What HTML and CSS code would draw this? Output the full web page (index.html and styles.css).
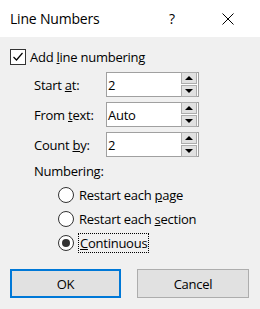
FILE: index.html
```html
<!DOCTYPE html>
<html lang="en">
<head>
    <meta charset="UTF-8">
    <title>Line Numbers</title>
    <link rel="stylesheet" href="styles.css">
</head>
<body>
    <div class="dialog">
        <div class="title-bar">
            <span class="title">Line Numbers</span>
            <span class="help">?</span>
            <span class="close">
                <svg viewBox="0 0 12 12" width="12" height="12"><path d="M0.5 0.5 L11.5 11.5 M11.5 0.5 L0.5 11.5" stroke="#000" stroke-width="1" fill="none"/></svg>
            </span>
        </div>
        <div class="content">
            <label class="check-row">
                <span class="checkbox">
                    <svg viewBox="0 0 14 14" width="14" height="14"><polyline points="2.5 7 5.5 10 11.5 3" fill="none" stroke="#000" stroke-width="1.2"/></svg>
                </span>
                <span>Add <u>l</u>ine numbering</span>
            </label>
            <div class="field-row">
                <span class="field-label">Start <u>a</u>t:</span>
                <div class="spinner">
                    <span class="spin-value">2</span>
                    <div class="spin-buttons">
                        <span class="spin-btn"><span class="tri-up"></span></span>
                        <span class="spin-btn"><span class="tri-down"></span></span>
                    </div>
                </div>
            </div>
            <div class="field-row">
                <span class="field-label">From <u>t</u>ext:</span>
                <div class="spinner">
                    <span class="spin-value">Auto</span>
                    <div class="spin-buttons">
                        <span class="spin-btn"><span class="tri-up"></span></span>
                        <span class="spin-btn"><span class="tri-down"></span></span>
                    </div>
                </div>
            </div>
            <div class="field-row">
                <span class="field-label">Count <u>b</u>y:</span>
                <div class="spinner">
                    <span class="spin-value">2</span>
                    <div class="spin-buttons">
                        <span class="spin-btn"><span class="tri-up"></span></span>
                        <span class="spin-btn"><span class="tri-down"></span></span>
                    </div>
                </div>
            </div>
            <div class="group-label">Numbering:</div>
            <div class="radio-list">
                <label class="radio-row">
                    <span class="radio"></span>
                    <span>Restart each <u>p</u>age</span>
                </label>
                <label class="radio-row">
                    <span class="radio"></span>
                    <span>Restart each <u>s</u>ection</span>
                </label>
                <label class="radio-row">
                    <span class="radio checked"></span>
                    <span class="focused"><u>C</u>ontinuous</span>
                </label>
            </div>
            <div class="buttons">
                <button class="btn default">OK</button>
                <button class="btn">Cancel</button>
            </div>
        </div>
    </div>
</body>
</html>
```
FILE: styles.css
```css
body {
    margin: 0;
    font-family: 'Open Sans', 'Noto Sans', sans-serif;
    font-size: 13px;
    letter-spacing: -0.25px;
    color: #000;
    background: #f0f0f0;
}
.dialog {
    width: 260px;
    height: 309px;
    background: #f0f0f0;
}
.title-bar {
    height: 37px;
    background: #fff;
    display: flex;
    align-items: center;
    font-size: 14px;
    letter-spacing: -0.2px;
}
.title {
    margin-left: 10px;
    width: 159px;
}
.help {
    width: 53px;
}
.close {
    display: flex;
}
.content {
    padding: 12px 0 0 10px;
}
.check-row {
    display: flex;
    align-items: center;
    gap: 4px;
    height: 16px;
}
.checkbox {
    width: 14px;
    height: 14px;
    border: 1px solid #333;
    background: #fff;
    display: flex;
}
.field-row {
    display: flex;
    align-items: center;
    margin-top: 7px;
    height: 25px;
}
.field-row + .field-row {
    margin-top: 5px;
}
.field-label {
    width: 72px;
    padding-left: 24px;
}
.spinner {
    width: 91px;
    height: 23px;
    border: 1px solid #a0a0a0;
    background: #fff;
    display: flex;
    align-items: center;
}
.spin-value {
    flex-grow: 1;
    padding-left: 1px;
}
.spin-buttons {
    display: flex;
    flex-direction: column;
    gap: 1px;
    margin-right: 1px;
}
.spin-btn {
    width: 14px;
    height: 10px;
    border: 1px solid #adadad;
    background: #e1e1e1;
    display: flex;
    align-items: center;
    justify-content: center;
}
.tri-up, .tri-down {
    width: 0;
    height: 0;
    border-left: 4px solid transparent;
    border-right: 4px solid transparent;
}
.tri-up {
    border-bottom: 4px solid #000;
}
.tri-down {
    border-top: 4px solid #000;
}
.group-label {
    margin-top: 2px;
    padding-left: 24px;
    height: 24px;
    line-height: 24px;
}
.radio-list {
    padding-left: 48px;
}
.radio-row {
    display: flex;
    align-items: center;
    gap: 5px;
    height: 24px;
}
.radio {
    width: 14px;
    height: 14px;
    border: 1px solid #333;
    border-radius: 50%;
    background: #fff;
    display: flex;
    align-items: center;
    justify-content: center;
}
.radio.checked::after {
    content: '';
    width: 8px;
    height: 8px;
    border-radius: 50%;
    background: #333;
}
.focused {
    outline: 1px dotted #000;
    padding: 0 1px;
}
.buttons {
    display: flex;
    gap: 16px;
    margin-top: 14px;
}
.btn {
    width: 112px;
    height: 29px;
    font-family: inherit;
    font-size: 13px;
    letter-spacing: -0.25px;
    color: #000;
    background: #e1e1e1;
    border: 1px solid #adadad;
    padding: 0;
}
.btn.default {
    width: 111px;
    border: 2px solid #0078d7;
}
```
